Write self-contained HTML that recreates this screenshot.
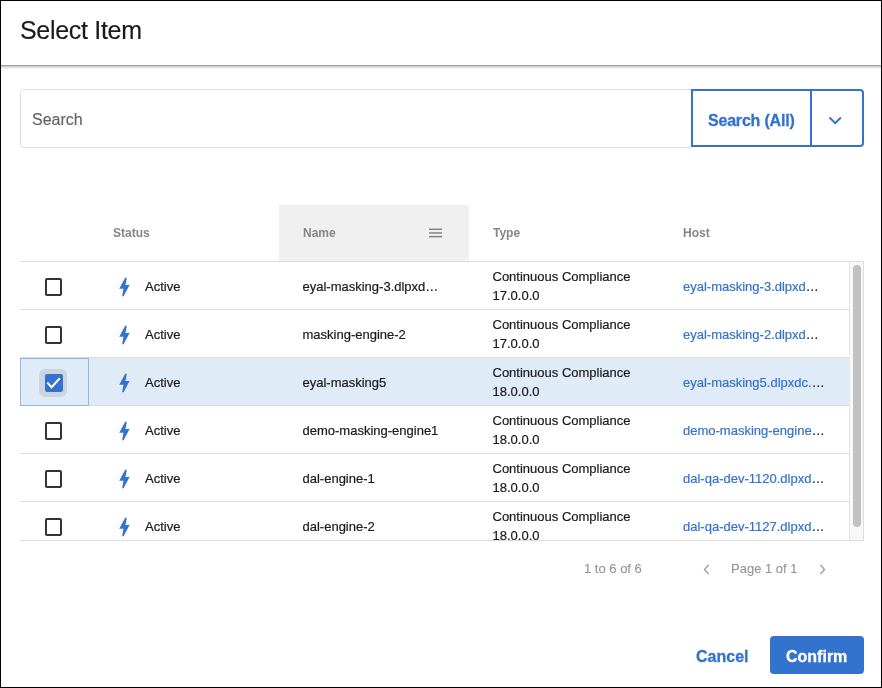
<!DOCTYPE html>
<html><head><meta charset="utf-8">
<style>
*{box-sizing:border-box;margin:0;padding:0}
html,body{width:882px;height:688px;overflow:hidden;background:#fff}
body{font-family:"Liberation Sans",sans-serif;position:relative;color:#222}
.page{position:absolute;left:0;top:0;width:882px;height:688px;background:#fff;will-change:transform;overflow:hidden}
.frame{position:absolute;left:0;top:0;width:882px;height:688px;border:1px solid #000;pointer-events:none;z-index:50}
.a{position:absolute;white-space:nowrap}
.title{left:20px;top:14.5px;font-size:25px;line-height:30px;color:#1a1a1a;letter-spacing:-0.3px;-webkit-text-stroke:0.15px currentColor}
.hdrline{position:absolute;left:1px;top:65px;width:880px;height:5px;background:linear-gradient(#a3a3a3 0,#a3a3a3 1px,#cbcbcb 1px,#cbcbcb 2px,#e6e6e6 2px,#e6e6e6 3px,#f3f3f3 3px,#f3f3f3 4px,#fafafa 4px,#fafafa 5px)}
.search{position:absolute;left:20px;top:89px;width:672px;height:59px;border:1px solid #dedede;border-radius:4px 0 0 4px}
.search span{position:absolute;left:11px;top:21px;font-size:16px;line-height:18px;color:#636363;-webkit-text-stroke:0.15px currentColor}
.sbtn{position:absolute;left:691px;top:89px;width:173px;height:58px;border:2px solid #3373cd;border-radius:0 4px 4px 0;background:#fff}
.sbtn .lbl{position:absolute;left:15px;top:21px;font-size:16px;line-height:18px;font-weight:bold;color:#3373cd;-webkit-text-stroke:0.3px currentColor;letter-spacing:-0.2px}
.sbtn .div{position:absolute;left:117px;top:0;width:2px;height:54px;background:#3373cd}
.th{font-size:12px;line-height:14px;font-weight:bold;color:#868686;top:226px}
.namebg{position:absolute;left:279px;top:205px;width:190px;height:56px;background:#f0f0f0}
.tbl{position:absolute;left:20px;top:261px;width:844px;height:280px;border-top:1px solid #dddddd;border-right:1px solid #dddddd;border-bottom:1px solid #dddddd;overflow:hidden}
.row{position:absolute;left:0;width:829px;height:48px;border-bottom:1px solid #dddddd}
.row.sel{background:#e0ebf8}
.cb{position:absolute;left:24.6px;top:16px;width:17.8px;height:17.6px;border:2px solid #333;border-radius:2px}
.t13{font-size:13px;line-height:16px;color:#1a1a1a;-webkit-text-stroke:0.2px currentColor}
.host{color:#3373cd}
.sbtrack{position:absolute;right:0;top:0;width:14px;height:278px;background:#f8f8f8;border-left:1px solid #e6e6e6}
.thumb{position:absolute;left:3px;top:3px;width:8px;height:262px;border-radius:4px;background:#c1c1c1}
.pg{font-size:13px;line-height:16px;color:#959595;top:561px;-webkit-text-stroke:0.1px currentColor}
.cancel{left:696px;top:648px;font-size:16px;line-height:18px;font-weight:bold;color:#3373cd;-webkit-text-stroke:0.3px currentColor}
.confirm{position:absolute;left:770px;top:636px;width:94px;height:38px;border-radius:4px;background:#3373cd}
.confirm span{position:absolute;left:16px;top:12px;font-size:16px;line-height:18px;font-weight:bold;color:#fff;-webkit-text-stroke:0.3px currentColor}
.bolt{position:absolute;left:95px;top:13px}
.st{left:125px;top:17px}
.nm{left:282.5px;top:17px}
.ty1{left:472.5px;top:7px}
.ty2{left:472.5px;top:26px}
.host{left:663px;top:17px}
.selcell{position:absolute;left:0;top:0;width:69px;height:48px;border:1px solid #8fb6ea}
.halo{position:absolute;left:19px;top:11px;width:28px;height:28px;border-radius:6px;background:#cbd5df}
.cbc{position:absolute;left:25px;top:16px;width:18px;height:18px;border-radius:2px;background:#3373cd}
.cbc svg{position:absolute;left:0;top:0}
</style></head><body><div class="page">
<div class="frame"></div>
<div class="a title">Select Item</div>
<div class="hdrline"></div>

<div class="search"><span>Search</span></div>
<div class="sbtn"><span class="a lbl">Search (All)</span><div class="div"></div>
<svg style="position:absolute;left:135px;top:25px" width="15" height="10" viewBox="0 0 15 10"><path d="M1.5 1.5 L7.2 7.2 L12.9 1.5" fill="none" stroke="#3373cd" stroke-width="2"/></svg>
</div>

<div class="namebg"></div>
<div class="a th" style="left:113px">Status</div>
<div class="a th" style="left:303px">Name</div>
<svg style="position:absolute;left:428px;top:228px" width="15" height="10" viewBox="0 0 15 10"><rect x="1" y="0.5" width="13" height="1.5" fill="#858585"/><rect x="1" y="4.2" width="13" height="1.5" fill="#858585"/><rect x="1" y="7.9" width="13" height="1.5" fill="#858585"/></svg>
<div class="a th" style="left:493px">Type</div>
<div class="a th" style="left:683px">Host</div>

<div class="tbl" id="tbl">
<div class="row" style="top:0px"><div class="cb"></div><svg class="bolt" width="20" height="24" viewBox="0 0 20 24"><path d="M10.2 2.8 L11.8 2.8 L10.5 9.9 L14.6 9.9 L8.6 21.2 L7.2 21.2 L8.4 13.7 L4.2 13.7 Z" fill="#3373cd"/></svg><div class="a t13 st">Active</div><div class="a t13 nm">eyal-masking-3.dlpxd…</div><div class="a t13 ty1">Continuous Compliance</div><div class="a t13 ty2">17.0.0.0</div><div class="a t13 host">eyal-masking-3.dlpxd<span style="color:#1e1e1e">…</span></div></div>
<div class="row" style="top:48px"><div class="cb"></div><svg class="bolt" width="20" height="24" viewBox="0 0 20 24"><path d="M10.2 2.8 L11.8 2.8 L10.5 9.9 L14.6 9.9 L8.6 21.2 L7.2 21.2 L8.4 13.7 L4.2 13.7 Z" fill="#3373cd"/></svg><div class="a t13 st">Active</div><div class="a t13 nm">masking-engine-2</div><div class="a t13 ty1">Continuous Compliance</div><div class="a t13 ty2">17.0.0.0</div><div class="a t13 host">eyal-masking-2.dlpxd<span style="color:#1e1e1e">…</span></div></div>
<div class="row sel" style="top:96px"><div class="selcell"></div><div class="halo"></div><div class="cbc"><svg width="18" height="18" viewBox="0 0 18 18"><path d="M2.3 8.6 L6.6 13.2 L14.8 4.3" fill="none" stroke="#fff" stroke-width="2.1"/></svg></div><svg class="bolt" width="20" height="24" viewBox="0 0 20 24"><path d="M10.2 2.8 L11.8 2.8 L10.5 9.9 L14.6 9.9 L8.6 21.2 L7.2 21.2 L8.4 13.7 L4.2 13.7 Z" fill="#3373cd"/></svg><div class="a t13 st">Active</div><div class="a t13 nm">eyal-masking5</div><div class="a t13 ty1">Continuous Compliance</div><div class="a t13 ty2">18.0.0.0</div><div class="a t13 host">eyal-masking5.dlpxdc.<span style="color:#1e1e1e">…</span></div></div>
<div class="row" style="top:144px"><div class="cb"></div><svg class="bolt" width="20" height="24" viewBox="0 0 20 24"><path d="M10.2 2.8 L11.8 2.8 L10.5 9.9 L14.6 9.9 L8.6 21.2 L7.2 21.2 L8.4 13.7 L4.2 13.7 Z" fill="#3373cd"/></svg><div class="a t13 st">Active</div><div class="a t13 nm">demo-masking-engine1</div><div class="a t13 ty1">Continuous Compliance</div><div class="a t13 ty2">18.0.0.0</div><div class="a t13 host">demo-masking-engine<span style="color:#1e1e1e">…</span></div></div>
<div class="row" style="top:192px"><div class="cb"></div><svg class="bolt" width="20" height="24" viewBox="0 0 20 24"><path d="M10.2 2.8 L11.8 2.8 L10.5 9.9 L14.6 9.9 L8.6 21.2 L7.2 21.2 L8.4 13.7 L4.2 13.7 Z" fill="#3373cd"/></svg><div class="a t13 st">Active</div><div class="a t13 nm">dal-engine-1</div><div class="a t13 ty1">Continuous Compliance</div><div class="a t13 ty2">18.0.0.0</div><div class="a t13 host">dal-qa-dev-1120.dlpxd<span style="color:#1e1e1e">…</span></div></div>
<div class="row" style="top:240px"><div class="cb"></div><svg class="bolt" width="20" height="24" viewBox="0 0 20 24"><path d="M10.2 2.8 L11.8 2.8 L10.5 9.9 L14.6 9.9 L8.6 21.2 L7.2 21.2 L8.4 13.7 L4.2 13.7 Z" fill="#3373cd"/></svg><div class="a t13 st">Active</div><div class="a t13 nm">dal-engine-2</div><div class="a t13 ty1">Continuous Compliance</div><div class="a t13 ty2">18.0.0.0</div><div class="a t13 host">dal-qa-dev-1127.dlpxd<span style="color:#1e1e1e">…</span></div></div>
<div class="sbtrack"><div class="thumb"></div></div>
</div>

<div class="a pg" style="left:584px">1 to 6 of 6</div>
<svg style="position:absolute;left:703px;top:563.5px" width="7" height="11" viewBox="0 0 7 11"><path d="M5.5 1 L1.5 5.5 L5.5 10" fill="none" stroke="#999" stroke-width="1.3"/></svg>
<div class="a pg" style="left:731px">Page 1 of 1</div>
<svg style="position:absolute;left:819px;top:563.5px" width="7" height="11" viewBox="0 0 7 11"><path d="M1.5 1 L5.5 5.5 L1.5 10" fill="none" stroke="#999" stroke-width="1.3"/></svg>

<div class="a cancel">Cancel</div>
<div class="confirm"><span>Confirm</span></div>

</div></body></html>
